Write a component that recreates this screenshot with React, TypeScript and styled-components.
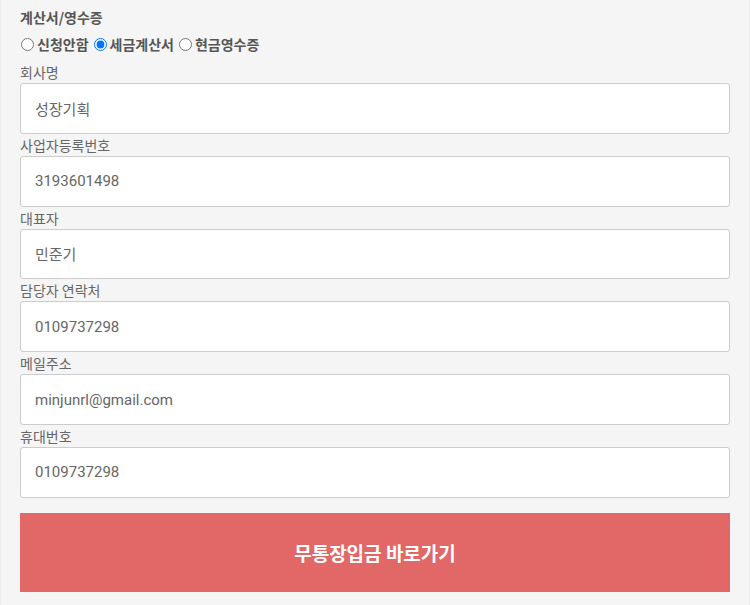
import React from "react";
import styled, { createGlobalStyle } from "styled-components";

const Global = createGlobalStyle`
  html, body { margin: 0; padding: 0; background: #f5f5f5; }
  body { font-family: "Noto Sans CJK KR", "Noto Sans", sans-serif; }
  * { box-sizing: border-box; }
`;

const Page = styled.div`
  width: 750px;
  height: 605px;
  background: #f5f5f5;
  border-left: 1px solid #ebebeb;
  border-right: 1px solid #ebebeb;
  padding: 5px 19px 0 19px;
  display: flex;
  flex-direction: column;
`;

const Heading = styled.div`
  font-size: 14px;
  font-weight: 700;
  color: #555;
  line-height: 24px;
`;

const RadioRow = styled.div`
  display: flex;
  align-items: center;
  height: 32px;
  padding-bottom: 2px;
  font-size: 14px;
  font-weight: 700;
  color: #555;
`;

const RadioLabel = styled.label`
  display: flex;
  align-items: center;
  margin-right: 4px;
  input { margin: 0 3px 0 1px; width: 13px; height: 13px; }
`;

const Field = styled.div`
  display: flex;
  flex-direction: column;
`;

const Label = styled.div`
  font-size: 14px;
  color: #666;
  line-height: 22px;
  height: 22px;
`;

const Input = styled.input`
  width: 100%;
  height: 50.8px;
  border: 1px solid #ccc;
  border-radius: 3px;
  background: #fff;
  padding: 0 14px;
  font-family: "Roboto", "Noto Sans CJK KR", sans-serif;
  font-size: 15px;
  color: #666;
  outline: none;
`;

const Button = styled.button`
  margin-top: 15px;
  width: 100%;
  height: 79px;
  border: none;
  background: #e26767;
  color: #fff;
  font-family: "Noto Sans CJK KR", sans-serif;
  font-size: 19px;
  font-weight: 700;
  cursor: pointer;
`;

const fields = [
  ["회사명", "성장기획"],
  ["사업자등록번호", "3193601498"],
  ["대표자", "민준기"],
  ["담당자 연락처", "0109737298"],
  ["메일주소", "minjunrl@gmail.com"],
  ["휴대번호", "0109737298"],
];

export default function App() {
  return (
    <>
      <Global />
      <Page>
        <Heading>계산서/영수증</Heading>
        <RadioRow>
          <RadioLabel><input type="radio" name="r" />신청안함</RadioLabel>
          <RadioLabel><input type="radio" name="r" defaultChecked />세금계산서</RadioLabel>
          <RadioLabel><input type="radio" name="r" />현금영수증</RadioLabel>
        </RadioRow>
        {fields.map(([l, v]) => (
          <Field key={l}>
            <Label>{l}</Label>
            <Input defaultValue={v} />
          </Field>
        ))}
        <Button>무통장입금 바로가기</Button>
      </Page>
    </>
  );
}
